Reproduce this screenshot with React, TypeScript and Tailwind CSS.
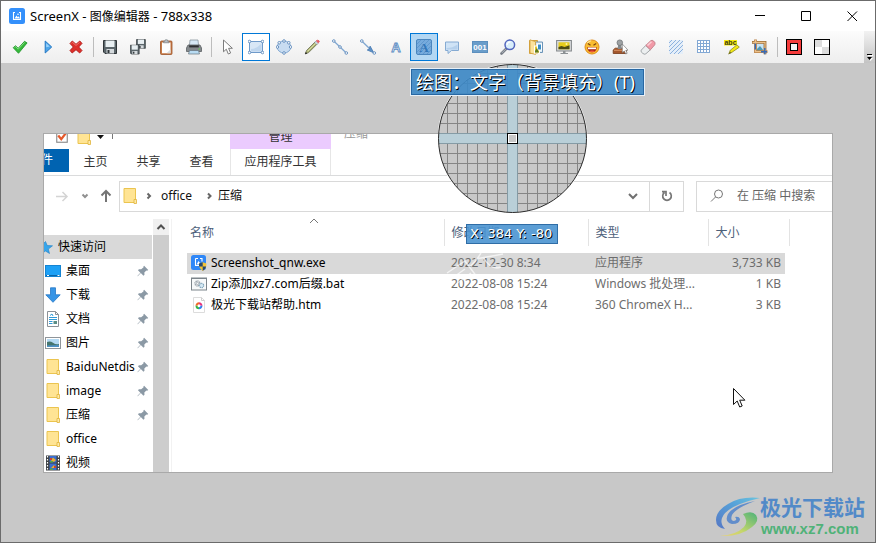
import React from "react";

type IconProps = { children: React.ReactNode; size?: string };

function Icon({ children, size = "h-4 w-4" }: IconProps) {
  return (
    <svg viewBox="0 0 16 16" className={`${size} shrink-0`} fill="none" aria-hidden="true">
      {children}
    </svg>
  );
}

const floppy = (
  <>
    <path d="M1.5 1.5h13v13H3L1.5 13z" fill="#5b666b" stroke="#2f3538" />
    <rect x="3.5" y="1.5" width="9" height="6.5" fill="#e8eff2" />
    <rect x="4.5" y="10" width="7.5" height="4.5" fill="#d5dadd" />
    <rect x="5.5" y="11" width="2" height="3" fill="#2f3538" />
  </>
);

type Tool = { label: string; icon: React.ReactNode; state?: "outlined" | "active" };

const fileIcons: Tool[] = [
  {
    label: "完成",
    icon: (
      <Icon>
        <path d="M1.2 8.7l2.3-2 2.7 2.6 6.3-7 2.6 1.6-8.6 10.4z" fill="#35b83a" stroke="#1f9428" strokeWidth=".8" strokeLinejoin="round" />
        <path d="M2.6 8.4l1-.8 2.6 2.6 6.4-6.8" stroke="#8ae288" strokeWidth=".9" />
      </Icon>
    ),
  },
  {
    label: "继续",
    icon: (
      <Icon>
        <path d="M5.2 2v12l6.5-6z" fill="#4ea6ea" stroke="#2377c4" strokeLinejoin="round" />
        <path d="M6.2 4.3v4l3.5-.8z" fill="#9ad2fa" />
      </Icon>
    ),
  },
  {
    label: "取消",
    icon: (
      <Icon>
        <path d="M4.3 2L8 5.3 11.8 2 14 4.4 10.7 8l3.3 3.5-2.3 2.5L8 10.7 4.2 14 2 11.5 5.3 8 2 4.5z" fill="#dd2f2a" stroke="#b01815" strokeWidth=".9" strokeLinejoin="round" />
        <path d="M3.6 4.2l.9-.9L8 6.4l3.6-3.1" stroke="#f58a83" strokeWidth=".8" />
      </Icon>
    ),
  },
];

const saveIcons: Tool[] = [
  { label: "保存", icon: <Icon>{floppy}</Icon> },
  {
    label: "另存为",
    icon: (
      <Icon>
        <g transform="translate(5.5 -.5) scale(.68)">{floppy}</g>
        <g transform="translate(-.7 5.2) scale(.68)">{floppy}</g>
      </Icon>
    ),
  },
  {
    label: "复制",
    icon: (
      <Icon>
        <rect x="2.5" y="2" width="11.5" height="13.5" rx="1" fill="#c77a46" stroke="#9c5429" strokeWidth=".8" />
        <path d="M4 3.5h8.5v10.7H4z" fill="#fdfdfd" />
        <path d="M12.5 10.5v3.7h-4z" fill="#d9dde0" />
        <path d="M5.5 3.8V2.3h1.3L7.3.8h2l.5 1.5h1.2v1.5z" fill="#b8bfc4" stroke="#747b80" strokeWidth=".6" />
      </Icon>
    ),
  },
  {
    label: "打印",
    icon: (
      <Icon>
        <path d="M4 1h8l.6 6H3.4z" fill="#d6e8f5" stroke="#7d8a93" strokeWidth=".7" />
        <path d="M2 6h12l1.5 3v3.5H.5V9z" fill="#84898c" stroke="#5a5f63" strokeWidth=".8" />
        <path d="M3.2 6.4h9.6v2H3.2z" fill="#2c2f31" />
        <path d="M3.5 11.5h9l1 3.5h-11z" fill="#b9dcf3" stroke="#66737c" strokeWidth=".7" />
        <path d="M12.5 10h1.5" stroke="#63d14d" />
      </Icon>
    ),
  },
];

const handle = (x: number, y: number) => (
  <circle key={`${x}-${y}`} cx={x} cy={y} r="1.3" fill="#fff" stroke="#5c89bb" strokeWidth=".9" />
);

const drawIcons: Tool[] = [
  {
    label: "选择",
    icon: (
      <Icon>
        <path d="M3.5 1v11.8l2.8-2.6 2 4.8 2.3-1-2-4.7h3.8z" fill="#fff" stroke="#7d7d7d" strokeLinejoin="round" />
      </Icon>
    ),
  },
  {
    label: "矩形",
    state: "outlined",
    icon: (
      <Icon>
        <rect x="1.5" y="2.5" width="13" height="11" fill="#d8e7f6" stroke="#6f9aca" />
        <path d="M3 12.5V10q6-.5 10.5-5.5v8z" fill="#bfd6ee" />
        {[[1.5, 2.5], [14.5, 2.5], [1.5, 13.5], [14.5, 13.5]].map(([x, y]) => handle(x, y))}
      </Icon>
    ),
  },
  {
    label: "椭圆",
    icon: (
      <Icon>
        <ellipse cx="8" cy="8" rx="6.8" ry="6" fill="#c8dcf1" stroke="#7fa6d2" />
        {[[8, 2], [8, 14], [1.4, 8], [14.6, 8], [3.2, 3.8], [12.8, 3.8]].map(([x, y]) => handle(x, y))}
      </Icon>
    ),
  },
  {
    label: "画笔",
    icon: (
      <Icon>
        <path d="M1.3 14.8l1.2-3.3L11.2 2.8l2.1 2.1-8.7 8.7z" fill="#a9b06c" stroke="#6d7156" strokeWidth=".8" />
        <path d="M3.5 12.3l8.5-8.5" stroke="#e3e6b5" />
        <path d="M10.7 3.3l2.1 2.1 1.1-1.1-2.1-2.1z" fill="#dbe6f1" stroke="#8194a5" strokeWidth=".5" />
        <path d="M12.2 1.8l2.1 2.1q1.5-.8.8-2-1.3-1.4-2.9-.1z" fill="#f0606a" stroke="#d84c55" strokeWidth=".7" />
        <path d="M1 15.2l.8-2.3 1.5 1.5z" fill="#222" />
      </Icon>
    ),
  },
  {
    label: "直线",
    icon: (
      <Icon>
        <path d="M2 2.2L14.3 14" stroke="#7fa6d0" strokeWidth="1.2" />
        {[[1.8, 2], [8, 8], [14.3, 14]].map(([x, y]) => handle(x, y))}
      </Icon>
    ),
  },
  {
    label: "箭头",
    icon: (
      <Icon>
        <path d="M2 2.2L11 11" stroke="#7fa6d0" strokeWidth="1.3" />
        <path d="M13.8 13.8L7.2 11l2-.9.9-3z" fill="#5e90c6" stroke="#467ab2" strokeWidth=".8" />
        {[[1.8, 2], [14.3, 14]].map(([x, y]) => handle(x, y))}
      </Icon>
    ),
  },
  {
    label: "文字（轮廓）",
    icon: (
      <Icon>
        <text x="8" y="12.5" textAnchor="middle" fontFamily="Liberation Sans, sans-serif" fontWeight="700" fontSize="13" fill="#fff" stroke="#5a8bc2" strokeWidth=".9">
          A
        </text>
      </Icon>
    ),
  },
  {
    label: "文字（背景填充）",
    state: "active",
    icon: (
      <Icon>
        <rect x=".5" y=".5" width="15" height="15" rx="1.5" fill="#76abdd" stroke="#4b86be" />
        <path d="M1 5l4-4M1 9l8-8M1 13l12-12M3 15L15 3M7 15l8-8M11 15l4-4" stroke="#5a93ca" strokeWidth=".8" />
        <text x="8" y="12.5" textAnchor="middle" fontFamily="Liberation Serif, serif" fontWeight="700" fontSize="13" fill="#3276b8">
          A
        </text>
      </Icon>
    ),
  },
  {
    label: "对话框",
    icon: (
      <Icon>
        <path d="M1.5 3h13v8.5H7.500L4 14.500v-3H1.500z" fill="#cfe3f6" stroke="#85aad2" strokeLinejoin="round" />
        <path d="M2.500 10.500V9q6 0 11-3.500v5z" fill="#b5d0ec" />
      </Icon>
    ),
  },
  {
    label: "步骤",
    icon: (
      <Icon>
        <rect x=".5" y="2.5" width="15" height="11" fill="#6a9dca" stroke="#5c8fbe" />
        <text x="8" y="11" textAnchor="middle" fontFamily="Liberation Sans, sans-serif" fontWeight="700" fontSize="8" fill="#fff">
          001
        </text>
      </Icon>
    ),
  },
  {
    label: "放大镜",
    icon: (
      <Icon>
        <path d="M1.5 14.5L6 10" stroke="#777d86" strokeWidth="2.6" strokeLinecap="round" />
        <path d="M1.8 14L5.8 10" stroke="#bfc5cc" strokeWidth=".8" />
        <circle cx="9.8" cy="5.8" r="4.8" fill="#d9eefb" stroke="#5265bd" strokeWidth="1.5" />
        <path d="M7 6q.4-3 3.5-3.2" stroke="#fff" strokeWidth="1.3" />
      </Icon>
    ),
  },
  {
    label: "图片文件",
    icon: (
      <Icon>
        <path d="M1.5 1.5h8v13h-8z" fill="#f5ce72" stroke="#d3a13c" />
        <path d="M7.5 3h7v10.500h-7z" fill="#dcebf5" stroke="#6c95b8" />
        <path d="M2 .8l5.500 2v12.700L2 14z" fill="#fbe29c" stroke="#d3a13c" strokeWidth=".8" />
        <rect x="6.500" y="7" width="5" height="7" fill="#e1c52f" stroke="#fff" />
        <rect x="9.500" y="5" width="4" height="6" fill="#3d8fc7" stroke="#fff" />
        <path d="M7 12l2-3 2 4.500H7z" fill="#5d7a20" />
      </Icon>
    ),
  },
  {
    label: "屏幕图片",
    icon: (
      <Icon>
        <rect x=".6" y="1.5" width="14.8" height="10.5" fill="#d8dadb" stroke="#83888b" />
        <rect x="2.5" y="3.3" width="11" height="7" fill="#e7cc1c" />
        <path d="M2.5 8l3-1 3 1 5-1.8v4.1h-11z" fill="#4c4a15" />
        <circle cx="10.5" cy="5" r="1" fill="#fff8a5" />
        <path d="M7 12h2.5v2H12v1H4.5v-1H7z" fill="#8c9194" />
      </Icon>
    ),
  },
  {
    label: "表情",
    icon: (
      <Icon>
        <circle cx="8" cy="8" r="7" fill="#f9bd31" stroke="#e08d1a" />
        <path d="M3.2 4q3-2.4 4-2" stroke="#fde598" strokeWidth="1.2" />
        <path d="M3.2 8.3h9.6q-.3 5-4.8 5t-4.8-5z" fill="#a72719" />
        <path d="M4 8.5h8v1.7H4z" fill="#fff" />
        <path d="M5 12.3q3-1.5 6 0-1.3 1-3 1t-3-1z" fill="#ef5a3c" />
        <path d="M3.8 4.5l2.7 1.7M12.2 4.5L9.5 6.2" stroke="#7b4410" strokeWidth="1.2" />
      </Icon>
    ),
  },
  {
    label: "图章",
    icon: (
      <Icon>
        <path d="M1.2 11l2-1.8h9l2 1.8v3.5h-13z" fill="#a4562b" stroke="#743816" strokeWidth=".8" />
        <path d="M2 11.3h11" stroke="#da9567" />
        <path d="M6.2 5h3l.5 5h-4z" fill="#85898c" />
        <circle cx="7.8" cy="3.7" r="2.8" fill="#9ea2a4" stroke="#696d70" strokeWidth=".7" />
        <path d="M10.3 5v8.7l2-1.7 1.4 3 1.5-.7-1.4-3h2.4z" fill="#fff" stroke="#666" strokeWidth=".6" />
      </Icon>
    ),
  },
  {
    label: "橡皮擦",
    icon: (
      <Icon>
        <path d="M1.2 11.2l4.6-4.8 4.6 4.4-4.6 4q-1.5 1-3-.4-2.5-1.6-1.6-3.2z" fill="#eceff0" stroke="#8c9295" strokeWidth=".8" />
        <path d="M5.8 6.4l4.8-4.6q1.5-1.2 3 .2 2.4 1.8 1.2 3.8l-4.4 5z" fill="#f29aa8" stroke="#bd7883" strokeWidth=".8" />
        <path d="M7.5 6.5l4-3.7" stroke="#fcd0d7" strokeWidth="1.4" />
      </Icon>
    ),
  },
  {
    label: "模糊",
    icon: (
      <Icon>
        <rect x="1" y="1" width="14" height="14" fill="#e4eef9" />
        <path d="M1 4l3-3M1 8l7-7M1 12L12 1M2 15L15 2M6 15l9-9M10 15l5-5" stroke="#8db2de" />
      </Icon>
    ),
  },
  {
    label: "像素化",
    icon: (
      <Icon>
        <rect x="1.5" y="1.5" width="12" height="12" fill="#fff" stroke="#82a8d4" />
        <path d="M4.500 1.500v12M7.500 1.500v12M10.500 1.500v12M1.500 4.500h12M1.500 7.500h12M1.500 10.500h12" stroke="#82a8d4" />
      </Icon>
    ),
  },
  {
    label: "高亮",
    icon: (
      <Icon>
        <path d="M0 1h13v5.5H0z" fill="#f8ef12" />
        <text x="6.5" y="6" textAnchor="middle" fontFamily="Liberation Sans, sans-serif" fontWeight="700" fontSize="7" fill="#3f3c12">
          abc
        </text>
        <path d="M5 14.5l1.3-3.3L13 5.8l2.3 2.4-7.2 5z" fill="#f3e913" stroke="#8d8a24" strokeWidth=".8" />
        <path d="M4 15.5l2-3 1.5 1.5z" fill="#74701e" />
      </Icon>
    ),
  },
  {
    label: "裁剪图像",
    icon: (
      <Icon>
        <rect x="5" y="5" width="7" height="7" fill="#c8e4f5" />
        <path d="M5 10l3-3 4 5H5z" fill="#4d9ab7" />
        <path d="M0 3.3h13v12" stroke="#9b6a32" strokeWidth="2.8" />
        <path d="M3.5.5v12.200h12" stroke="#ba8147" strokeWidth="2.8" />
        <path d="M.5 3.3H13V15" stroke="#ebc18a" strokeWidth="1.2" />
        <path d="M3.500 1v11.700H15" stroke="#ebc18a" strokeWidth="1.2" />
        <path d="M12.800 9v6.300M9 12.700h6M3.300 4.500v6" stroke="#3569b7" strokeWidth="1.4" />
      </Icon>
    ),
  },
];

const colorIcons: Tool[] = [
  {
    label: "边框颜色",
    icon: (
      <Icon>
        <rect x=".5" y=".5" width="15" height="15" fill="#f53b3b" stroke="#000" />
        <rect x="4.5" y="4.5" width="7" height="7" fill="#f4f4f4" stroke="#000" />
      </Icon>
    ),
  },
  {
    label: "填充颜色",
    icon: (
      <Icon>
        <rect x=".5" y=".5" width="15" height="15" fill="#fff" stroke="#000" />
        <path d="M1 1h7v7H1zM8 8h7v7H8z" fill="#ddd" />
      </Icon>
    ),
  },
];

function ToolGroup({ tools }: { tools: Tool[] }) {
  return (
    <>
      {tools.map(({ label, icon, state }) => {
        const look =
          state === "active"
            ? "border-[#0078d7] bg-[#b3d7f3]"
            : state === "outlined"
              ? "border-[#0078d7] bg-white"
              : "border-transparent";
        return (
          <button key={label} type="button" aria-label={label} className={`flex h-7 w-7 shrink-0 items-center justify-center border ${look}`}>
            {icon}
          </button>
        );
      })}
    </>
  );
}

function ToolSeparator() {
  return (
    <div className="flex w-[6px] shrink-0 justify-center">
      <div className="h-5 w-px bg-[#bdbdbd]" />
    </div>
  );
}

function AppLogo() {
  return (
    <Icon>
      <rect width="16" height="16" rx="2.5" fill="#3490fb" />
      <path d="M6 4.5H4.5v7h7v-7H10" stroke="#fff" strokeWidth="1.1" />
      <path d="M5.5 10.5l2-3 1.3 1.7.9-1 1.3 2.3z" fill="#fff" />
      <circle cx="9" cy="6.3" r=".8" fill="#fff" />
    </Icon>
  );
}

function Folder() {
  return (
    <Icon>
      <path d="M2 .5h11.5v14H2z" fill="#ffe494" stroke="#ebc44f" />
      <path d="M12 11.5h2.5v4H12z" fill="#ffe9a8" stroke="#e0b43a" strokeWidth=".8" />
    </Icon>
  );
}

function Pin() {
  return (
    <Icon size="h-3 w-3">
      <path d="M9.5 1l5.5 5.5-1.5 1-1-.3-2.7 2.8.2 3-1.4 1.3-3.5-3.5L1 15l-.5-.5 4-4.2L1.300 7l1.300-1.400 3 .2L8.800 3 8.500 2z" fill="#8b99a5" />
    </Icon>
  );
}

const places: { name: string; pinned: boolean; icon: React.ReactNode }[] = [
  {
    name: "桌面",
    pinned: true,
    icon: (
      <Icon>
        <rect x=".5" y="2.5" width="15" height="11" fill="#1da0f5" stroke="#1584d2" />
        <path d="M1 12.5h14" stroke="#0a65a8" />
        <path d="M2 12.5h2M12.5 12.5h2" stroke="#fff" />
      </Icon>
    ),
  },
  {
    name: "下载",
    pinned: true,
    icon: (
      <Icon>
        <path d="M5.5.8h5v7h4.700L8 15.300.8 7.800h4.700z" fill="#3795e6" stroke="#2477c5" strokeWidth=".8" />
      </Icon>
    ),
  },
  {
    name: "文档",
    pinned: true,
    icon: (
      <Icon>
        <path d="M2.5.5h8l3 3v12h-11z" fill="#fff" stroke="#8b9196" />
        <path d="M10.5.5v3h3" stroke="#8b9196" />
        <path d="M4 6.500h8M4 8.500h8M4 10.500h3.500M4 12.500h3.500M5 4.500l2-1.500 1 2" stroke="#2f9ad8" />
        <path d="M8.500 10h3.500v3H8.500z" fill="#5b8e86" />
      </Icon>
    ),
  },
  {
    name: "图片",
    pinned: true,
    icon: (
      <Icon>
        <rect x=".5" y="2.5" width="15" height="11" fill="#fff" stroke="#8f959a" />
        <path d="M2 4h12v8H2z" fill="#b5daf3" />
        <path d="M2 7q3-1.5 6 .8T14 9v3H2z" fill="#45756e" />
        <path d="M2 10.5l12-.5v2H2z" fill="#4f92c4" />
      </Icon>
    ),
  },
  { name: "BaiduNetdis", pinned: true, icon: <Folder /> },
  { name: "image", pinned: true, icon: <Folder /> },
  { name: "压缩", pinned: true, icon: <Folder /> },
  { name: "office", pinned: false, icon: <Folder /> },
  {
    name: "视频",
    pinned: false,
    icon: (
      <Icon>
        <rect x="1" y=".5" width="14" height="15" fill="#3d4145" />
        <path d="M2.5 1v14M13.5 1v14" stroke="#fff" strokeWidth="1.2" strokeDasharray="1.5 1.5" />
        <path d="M4.500 1h7v6.500h-7zM4.500 8.500h7v6.500h-7z" fill="#3b6fd0" />
        <path d="M6 5.500l2-3 3 2.500-2 2zM6 13l3-3 2 3z" fill="#e9ae2d" />
        <path d="M5 3h2v2H5zM9 11h2v2H9z" fill="#cc4130" />
        <path d="M5 6h3v1.500H5zM5 13.500h3V15H5z" fill="#56a64b" />
      </Icon>
    ),
  },
];

const files = [
  {
    name: "Screenshot_qnw.exe",
    date: "2022-12-30 8:34",
    type: "应用程序",
    size: "3,733 KB",
    selected: true,
    icon: (
      <Icon>
        <rect width="15" height="15" rx="2.5" fill="#2f87f7" />
        <path d="M4.5 3.5v7h5M4.5 3.5H7M9 3.5h2v3" stroke="#fff" strokeWidth="1.1" />
        <path d="M5.5 9.5l2-3.5 2.5 3.5z" fill="#fff" />
        <path d="M8 8.5l3.7-1.2 3.7 1.2q.2 5-3.7 7.5Q7.800 13.500 8 8.500z" fill="#f5c434" />
        <path d="M11.700 7.300L8 8.500v3h3.700zM11.700 11.500h3.500q-.7 3-3.500 4.500z" fill="#27496f" />
      </Icon>
    ),
  },
  {
    name: "Zip添加xz7.com后缀.bat",
    date: "2022-08-08 15:24",
    type: "Windows 批处理...",
    size: "1 KB",
    selected: false,
    icon: (
      <Icon>
        <rect x=".5" y="2" width="15" height="12" fill="#f7f9fa" stroke="#7d858b" />
        <path d="M.5 2.5h15" stroke="#7d858b" />
        <circle cx="6.5" cy="7.5" r="2.5" stroke="#8d979f" strokeWidth="1.3" strokeDasharray="1.2 .7" />
        <circle cx="6.5" cy="7.5" r="1.2" stroke="#8d979f" strokeWidth=".7" />
        <circle cx="10.5" cy="9.5" r="2.2" fill="#d5e8f3" stroke="#7fa5bb" strokeWidth="1.2" strokeDasharray="1.2 .6" />
      </Icon>
    ),
  },
  {
    name: "极光下载站帮助.htm",
    date: "2022-08-08 15:24",
    type: "360 ChromeX H...",
    size: "3 KB",
    selected: false,
    icon: (
      <Icon>
        <path d="M2.5.5h8l3 3v12h-11z" fill="#fff" stroke="#dcdcdc" />
        <path d="M10.5.5v3h3" stroke="#cfcfcf" />
        <path d="M5.5 8.8A2.5 2.5 0 0 1 8 6.3" stroke="#f06a2a" strokeWidth="2" />
        <path d="M8 6.3a2.5 2.5 0 0 1 2.5 2.5" stroke="#e8347c" strokeWidth="2" />
        <path d="M10.5 8.8a2.5 2.5 0 0 1-2.5 2.5" stroke="#2d7ff0" strokeWidth="2" />
        <path d="M8 11.3a2.5 2.5 0 0 1-2.5-2.5" stroke="#39b54a" strokeWidth="2" />
      </Icon>
    ),
  },
];

function TitleBar() {
  return (
    <header className="flex h-[30px] items-center bg-white pl-2">
      <AppLogo />
      <h1 className="ml-[5px] flex-1 text-[13px] leading-4 text-black">
        ScreenX - <span className="text-[12px]">图像编辑器</span> - 788x338
      </h1>
      <div className="flex h-full">
        {[
          ["最小化", "M3 7.5h10"],
          ["最大化", "M3.5 3.5h9v9h-9z"],
          ["关闭", "M3.5 3.5l9.5 9.5M13 3.5L3.5 13"],
        ].map(([label, path]) => (
          <button key={label} type="button" aria-label={label} className="flex w-[46px] items-center justify-center">
            <Icon>
              <path d={path} stroke="#000" />
            </Icon>
          </button>
        ))}
      </div>
    </header>
  );
}

function Toolbar() {
  return (
    <div role="toolbar" aria-label="绘图工具" className="flex h-8 items-center bg-linear-to-b from-[#fcfcfc] to-[#eeeeee] pl-[5px]">
      <ToolGroup tools={fileIcons} />
      <ToolSeparator />
      <ToolGroup tools={saveIcons} />
      <ToolSeparator />
      <ToolGroup tools={drawIcons} />
      <ToolSeparator />
      <ToolGroup tools={colorIcons} />
      <button type="button" aria-label="更多工具" className="ml-auto flex h-full w-[11px] shrink-0 items-end justify-center bg-linear-to-b from-[#f2f2f2] to-[#c4c4c4] pb-[2px]">
        <svg viewBox="0 0 7 8" className="h-2 w-[7px]" aria-hidden="true">
          <path d="M2 2h5v1H2zM2 5h5L4.5 8z" fill="#fff" />
          <path d="M1 1h5v1H1zM1 4h5L3.5 7z" fill="#000" />
        </svg>
      </button>
    </div>
  );
}

function Ribbon() {
  return (
    <div className="border-b border-[#dadbdc]">
      <div className="flex h-[15px] items-end overflow-hidden">
        <div className="flex h-6 w-[186px] shrink-0 items-center pl-3">
          <Icon size="h-3 w-3">
            <rect x="1" y="1" width="14" height="14" fill="#fff" stroke="#8a8a8a" strokeWidth="1.5" />
            <path d="M3 6l4 5 6-8" stroke="#e4592b" strokeWidth="3" />
          </Icon>
          <div className="ml-2">
            <Folder />
          </div>
          <svg viewBox="0 0 7 4" className="ml-[5px] h-1 w-[7px]" aria-hidden="true">
            <path d="M0 0h7L3.5 4z" fill="#111" />
          </svg>
          <div className="mb-2 ml-2 h-3 w-px bg-[#777]" />
        </div>
        <div className="h-6 w-[101px] shrink-0 bg-[#ebcbfe] text-center leading-6 text-[#333]">管理</div>
        <div className="h-[30px] pl-[13px] leading-[30px] text-[#999]">压缩</div>
      </div>
      <div className="flex h-[26px] items-start text-[#333]">
        <button type="button" className="flex h-[23px] w-[25px] shrink-0 items-center justify-end overflow-hidden bg-[#0063b1] pr-4 text-white">
          <span className="shrink-0">文件</span>
        </button>
        {["主页", "共享", "查看"].map((tab) => (
          <button key={tab} type="button" className="h-[26px] w-[53px] shrink-0">
            {tab}
          </button>
        ))}
        <button type="button" className="ml-[2px] h-[26px] w-[101px] shrink-0 border-x border-[#e6e6e6]">
          应用程序工具
        </button>
      </div>
    </div>
  );
}

function Chevron({ d, color = "#666", width = 2 }: { d: string; color?: string; width?: number }) {
  return (
    <Icon>
      <path d={d} stroke={color} strokeWidth={width} />
    </Icon>
  );
}

function AddressRow() {
  return (
    <div className="mt-[5px] flex h-[31px] items-stretch">
      <nav className="flex w-[75px] shrink-0 items-center pl-[10px]">
        <button type="button" aria-label="前进">
          <Chevron d="M2 8.5h11M8.5 4l4.5 4.5L8.5 13" color="#d4d4d4" width={1.5} />
        </button>
        <button type="button" aria-label="最近位置" className="ml-[7px]">
          <Chevron d="M5.5 6.5L8 9l2.500-2.500" color="#909090" />
        </button>
        <button type="button" aria-label="上移" className="ml-[5px]">
          <Chevron d="M8 14V3M3.5 7.5L8 3l4.5 4.5" color="#757575" />
        </button>
      </nav>
      <div className="flex min-w-0 flex-1 items-center border border-[#d9d9d9] pl-[2px] text-[#111]">
        <Folder />
        <div className="ml-[3px] flex items-center">
          <Chevron d="M6.5 5.5L9 8l-2.500 2.500" />
          <span className="ml-1 w-[41px]">office</span>
          <Chevron d="M6 5.5L8.5 8 6 10.500" />
          <span>压缩</span>
        </div>
        <button type="button" aria-label="展开地址" className="ml-auto flex h-full w-[34px] items-center justify-center border-r border-[#d9d9d9]">
          <Chevron d="M4 6l4 4 4-4" color="#707070" />
        </button>
        <button type="button" aria-label="刷新" className="flex h-full w-[33px] items-center justify-center">
          <Icon>
            <path d="M10.5 4.5A4.300 4.300 0 1 1 5.500 4.500M3 3.700h4V8" stroke="#777" strokeWidth="1.7" />
          </Icon>
        </button>
      </div>
      <label className="ml-3 flex w-[136px] shrink-0 items-center border-y border-l border-[#d9d9d9] pl-3">
        <Icon>
          <circle cx="9.5" cy="6" r="4" stroke="#777" />
          <path d="M6.5 9L2 13.5" stroke="#777" />
        </Icon>
        <input type="text" aria-label="搜索" defaultValue="在 压缩 中搜索" className="ml-3 w-0 flex-1 bg-transparent text-[12px] text-[#666] outline-none" />
      </label>
    </div>
  );
}

function Sidebar() {
  return (
    <aside className="flex shrink-0">
      <ul className="w-[108px] pt-4">
        <li className="flex h-6 items-center overflow-hidden bg-[#d9d9d9]">
          <svg viewBox="0 0 9 14" className="h-[14px] w-[9px] shrink-0" aria-hidden="true">
            <path d="M1.5 1.5l1.7 4 5.3.3-4.2 3.3 1.2 4.4-4-2.5-3 2V4.500z" fill="#38a5ea" stroke="#1d7fc8" strokeWidth=".6" />
          </svg>
          <span className="ml-[5px]">快速访问</span>
        </li>
        {places.map(({ name, pinned, icon }) => (
          <li key={name} className="flex h-6 items-center pl-px">
            {icon}
            <span className="ml-[5px] flex-1 whitespace-nowrap">{name}</span>
            {pinned && (
              <span className="mr-[3px]">
                <Pin />
              </span>
            )}
          </li>
        ))}
      </ul>
      <div className="ml-px w-4 bg-[#cdcdcd]">
        <button type="button" aria-label="向上滚动" className="flex h-4 w-4 items-center justify-center bg-[#f0f0f0]">
          <Chevron d="M4.5 10L8 6.500l3.500 3.500" color="#505050" />
        </button>
      </div>
      <div className="ml-[2px] w-px bg-[#f2f2f2]" />
    </aside>
  );
}

const headCell = "border-r border-[#e3e3e3] p-0 pt-[2px] pl-[7px] font-normal";

function FileTable() {
  return (
    <div className="min-w-0 flex-1 pl-[15px]">
      <table className="w-[602px] table-fixed border-collapse text-left">
        <colgroup>
          <col className="w-[257px]" />
          <col className="w-[144px]" />
          <col className="w-[120px]" />
          <col className="w-[77px]" />
          <col className="w-1" />
        </colgroup>
        <thead className="text-[#4c607a]">
          <tr className="h-[27px]">
            <th className="relative border-r border-[#e3e3e3] p-0 pt-[2px] pl-[3px] font-normal">
              名称
              <span className="absolute -top-[6px] left-[119px]">
                <Chevron d="M4 10l4-4 4 4" color="#777" width={1} />
              </span>
            </th>
            <th className={headCell}>修改日期</th>
            <th className={headCell}>类型</th>
            <th colSpan={2} className={headCell}>
              大小
            </th>
          </tr>
        </thead>
        <tbody className="text-[#6d6d6d]">
          <tr className="h-[7px]" />
          {files.map(({ name, date, type, size, selected, icon }) => {
            const cell = selected ? "bg-[#d9d9d9] p-0" : "p-0";
            return (
              <tr key={name} className="h-[21px]">
                <td className={`${cell} pl-1 text-black`}>
                  <span className="flex items-center gap-1">
                    {icon}
                    {name}
                  </span>
                </td>
                <td className={`${cell} pl-[7px]`}>{date}</td>
                <td className={`${cell} pl-[7px]`}>{type}</td>
                <td className={`${cell} pr-1 text-right`}>{size}</td>
              </tr>
            );
          })}
        </tbody>
      </table>
    </div>
  );
}

const gridSteps = Array.from({ length: 15 }, (_, i) => i * 10 - 0.5).filter((n) => n !== 69.5 && n !== 79.5);

function Magnifier() {
  return (
    <svg viewBox="0 0 150 150" className="absolute top-[63px] left-[437px] h-[150px] w-[150px]" aria-hidden="true">
      <defs>
        <clipPath id="lens">
          <circle cx="74.5" cy="74.5" r="74" />
        </clipPath>
      </defs>
      <g clipPath="url(#lens)">
        <rect width="150" height="150" fill="#c8c8c8" />
        <path d="M69.5 0h10v150h-10zM0 69.5h150v10H0z" fill="#b9cfd8" />
        {gridSteps.map((n) => (
          <path key={n} d={`M${n} 0V69.5M${n} 79.5V150M0 ${n}H69.5M79.5 ${n}H150`} stroke="#858585" />
        ))}
        <path d="M69.5 0v150M79.5 0v150M0 69.5h150M0 79.5h150" stroke="#859ba5" />
      </g>
      <circle cx="74.5" cy="74.5" r="74.5" fill="none" stroke="#fff" />
      <circle cx="74.5" cy="74.5" r="74" fill="none" stroke="#2a2a2a" />
      <rect x="69.5" y="69.5" width="10" height="10" fill="#c8c8c8" stroke="#000" />
      <rect x="70.5" y="70.5" width="8" height="8" fill="none" stroke="#fff" />
    </svg>
  );
}

function Watermark() {
  return (
    <div className="absolute right-[10px] bottom-[3px] flex items-center opacity-90">
      <svg viewBox="0 0 46 44" className="h-11 w-[46px]" aria-hidden="true">
        <defs>
          <linearGradient id="wave" x1="0" y1="1" x2="1" y2="0">
            <stop offset="0" stopColor="#4a6fc4" />
            <stop offset=".6" stopColor="#4a9edb" />
            <stop offset="1" stopColor="#62c4e2" />
          </linearGradient>
          <linearGradient id="leaf" x1="0" y1="1" x2="1" y2="0">
            <stop offset="0" stopColor="#f0d468" />
            <stop offset=".4" stopColor="#c5d862" />
            <stop offset="1" stopColor="#3fb072" />
          </linearGradient>
        </defs>
        <path d="M46 3Q27 1 14 9 2 16 2 25q0 8 9 9-5-5-3-11Q12 11 46 3z" fill="url(#wave)" />
        <path d="M41 6Q20 10 14 19q-4 8 4 10 8 0 8-5-1-3-5-2 3 3-1 4-4 0-2-6Q22 13 41 6z" fill="#5687cc" />
        <path d="M6 41q16-1 24-9 5-6-1-13 9-4 13 1 4 6-4 12Q26 42 6 41z" fill="url(#leaf)" />
        <path d="M3 38q15 1 24-8" stroke="#c8c8c8" strokeWidth="1.2" fill="none" />
      </svg>
      <div className="w-[105px] font-bold">
        <div className="text-[21px] leading-6 whitespace-nowrap text-[#4684c8]">极光下载站</div>
        <div className="pl-px font-['Liberation_Sans',sans-serif] text-[15px] leading-5 text-[#43b070]">www.xz7.com</div>
      </div>
    </div>
  );
}

export default function App() {
  return (
    <div className="relative flex min-h-screen flex-col overflow-hidden border border-[#6b6b6b] bg-[#c8c8c8] font-['Noto_Sans','Noto_Sans_CJK_SC',sans-serif] text-[12px] leading-4 text-black">
      <TitleBar />
      <Toolbar />
      <main className="flex flex-1 flex-col justify-center px-[42px]">
        <div className="h-[340px] overflow-hidden border border-[#a9a9a9] bg-white">
          <Ribbon />
          <AddressRow />
          <div className="mt-[7px] flex">
            <Sidebar />
            <FileTable />
          </div>
        </div>
      </main>

      <svg viewBox="0 0 60 40" className="absolute top-[250px] left-[444px] h-10 w-[60px]" fill="none" stroke="#fff" strokeOpacity=".65" strokeWidth="1.5" aria-hidden="true">
        <path d="M2 22L20 10l12 16M6 28l14-10M10 34l16-12M36 2q-6 10-12 14M30 8q12-2 28-5M38 6q8 14 18 10" />
      </svg>
      <Magnifier />
      <div className="absolute top-[223px] left-[465px] border border-[#2f6da6] bg-[#4a94d0]/90 pr-[5px] pl-[3px] font-['DejaVu_Sans',sans-serif] text-[13px] leading-[18px] whitespace-nowrap text-white [text-shadow:1px_1px_0_#000]">
        X: 384 Y: -80
      </div>
      <div className="absolute top-[67px] left-[409px] border border-[#e6f0f8]">
        <div role="tooltip" className="border border-[#2868a3] bg-[#3d8ac8]/90 pr-2 pl-1 text-[18px] leading-6 whitespace-nowrap text-white [text-shadow:1px_1px_0_#000]">
          绘图：文字（背景填充）(T)
        </div>
      </div>
      <svg viewBox="0 0 13 20" className="absolute top-[387px] left-[732px] h-5 w-[13px]" aria-hidden="true">
        <path d="M.5.5v16l3.7-3.5 2.5 6 2.5-1-2.500-5.800h5.200z" fill="#fff" stroke="#111" />
      </svg>
      <Watermark />
    </div>
  );
}
